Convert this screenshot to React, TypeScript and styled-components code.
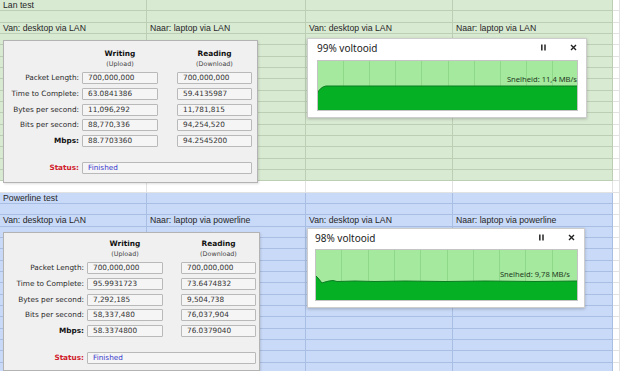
import React from "react";
import styled, { createGlobalStyle } from "styled-components";

const Global = createGlobalStyle`
  html, body { margin: 0; padding: 0; background: #ffffff; }
  body { width: 620px; height: 371px; overflow: hidden; }
`;

type Tone = "green" | "blue" | "white";

const tones: Record<Tone, { bg: string; line: string }> = {
  green: { bg: "#d9ead3", line: "#bccfb5" },
  blue: { bg: "#c9daf8", line: "#a9bee3" },
  white: { bg: "#ffffff", line: "#e2e2e2" },
};

const Page = styled.div`
  position: relative;
  width: 620px;
  height: 371px;
  overflow: hidden;
  font-family: "Liberation Sans", Arial, sans-serif;
`;

const Sheet = styled.div`
  display: flex;
  flex-direction: column;
`;

const Row = styled.div`
  display: grid;
  grid-template-columns: 147px 159px 147px 160px 1fr;
  height: 11.33px;
  flex: none;
`;

const Cell = styled.div<{ $tone: Tone }>`
  box-sizing: border-box;
  background: ${(p) => tones[p.$tone].bg};
  border-right: 1px solid ${(p) => tones[p.$tone].line};
  border-bottom: 1px solid ${(p) => tones[p.$tone].line};
  padding-left: 3px;
  font-size: 8.7px;
  line-height: 10.33px;
  color: #262626;
  white-space: nowrap;
  overflow: hidden;
`;

/* ---------- stats dialog ---------- */

const StatsPanel = styled.div<{ $top: number; $w: number; $h: number; $label: number; $padTop: number; $spacer: number }>`
  position: absolute;
  left: 3px;
  top: ${(p) => p.$top}px;
  width: ${(p) => p.$w}px;
  height: ${(p) => p.$h}px;
  box-sizing: border-box;
  padding-top: ${(p) => p.$padTop}px;
  background: #f0f0f0;
  border: 1px solid #b3b3b3;
  box-shadow: 1px 1px 2px rgba(0, 0, 0, 0.12);
  font-family: "DejaVu Sans", Verdana, sans-serif;
  font-size: 7.3px;
  color: #2a2a2a;
  display: grid;
  grid-template-columns: ${(p) => p.$label}px 76px ${(p) => p.$spacer}px 75px;
  grid-template-rows: 19.25px repeat(5, 12px) auto;
  row-gap: 3.75px;
  align-content: start;
`;

const Head = styled.div<{ $col: number }>`
  grid-column: ${(p) => p.$col};
  grid-row: 1;
  display: flex;
  flex-direction: column;
  align-items: center;
  line-height: 10px;
`;

const HeadTitle = styled.span`
  font-weight: bold;
  font-size: 7.4px;
  color: #111;
`;

const HeadSub = styled.span`
  font-size: 6.4px;
  color: #444;
`;

const Label = styled.div<{ $row: number; $strong?: boolean; $alert?: boolean; $gapTop?: number }>`
  grid-column: 1;
  grid-row: ${(p) => p.$row};
  text-align: right;
  padding-right: 3px;
  line-height: 12px;
  white-space: nowrap;
  font-weight: ${(p) => (p.$strong || p.$alert ? "bold" : "normal")};
  color: ${(p) => (p.$alert ? "#d0202c" : p.$strong ? "#111" : "#2a2a2a")};
  margin-top: ${(p) => p.$gapTop ?? 0}px;
`;

const ValueBox = styled.div<{ $row: number; $col: string; $accent?: boolean; $gapTop?: number }>`
  grid-column: ${(p) => p.$col};
  grid-row: ${(p) => p.$row};
  box-sizing: border-box;
  height: 12px;
  border: 1px solid #b9b9b9;
  border-radius: 1px;
  background: #f5f5f5;
  padding-left: 5px;
  line-height: 10px;
  color: ${(p) => (p.$accent ? "#3b3bcc" : "#333")};
  white-space: nowrap;
  margin-top: ${(p) => p.$gapTop ?? 0}px;
`;

type Stat = { label: string; w: string; r: string; strong?: boolean };

const lanStats: Stat[] = [
  { label: "Packet Length:", w: "700,000,000", r: "700,000,000" },
  { label: "Time to Complete:", w: "63.0841386", r: "59.4135987" },
  { label: "Bytes per second:", w: "11,096,292", r: "11,781,815" },
  { label: "Bits per second:", w: "88,770,336", r: "94,254,520" },
  { label: "Mbps:", w: "88.7703360", r: "94.2545200", strong: true },
];

const plcStats: Stat[] = [
  { label: "Packet Length:", w: "700,000,000", r: "700,000,000" },
  { label: "Time to Complete:", w: "95.9931723", r: "73.6474832" },
  { label: "Bytes per second:", w: "7,292,185", r: "9,504,738" },
  { label: "Bits per second:", w: "58,337,480", r: "76,037,904" },
  { label: "Mbps:", w: "58.3374800", r: "76.0379040", strong: true },
];

function Stats(props: { top: number; w: number; h: number; label: number; padTop: number; spacer: number; stats: Stat[] }) {
  return (
    <StatsPanel $top={props.top} $w={props.w} $h={props.h} $label={props.label} $padTop={props.padTop} $spacer={props.spacer}>
      <Head $col={2}>
        <HeadTitle>Writing</HeadTitle>
        <HeadSub>(Upload)</HeadSub>
      </Head>
      <Head $col={4}>
        <HeadTitle>Reading</HeadTitle>
        <HeadSub>(Download)</HeadSub>
      </Head>
      {props.stats.map((s, i) => (
        <React.Fragment key={s.label}>
          <Label $row={i + 2} $strong={s.strong}>{s.label}</Label>
          <ValueBox $row={i + 2} $col="2">{s.w}</ValueBox>
          <ValueBox $row={i + 2} $col="4">{s.r}</ValueBox>
        </React.Fragment>
      ))}
      <Label $row={7} $alert $gapTop={11.25}>Status:</Label>
      <ValueBox $row={7} $col="2 / 5" $accent $gapTop={11.25}>Finished</ValueBox>
    </StatsPanel>
  );
}

/* ---------- copy progress window ---------- */

const CopyWindow = styled.div<{ $top: number; $w: number; $padL: number }>`
  position: absolute;
  left: 307px;
  top: ${(p) => p.$top}px;
  width: ${(p) => p.$w}px;
  height: 80px;
  box-sizing: border-box;
  padding: 0 7px 0 ${(p) => p.$padL}px;
  background: #ffffff;
  border: 1px solid #cdcdcd;
  box-shadow: 0 1px 3px rgba(0, 0, 0, 0.22);
  font-family: "Noto Sans", "Open Sans", sans-serif;
  display: flex;
  flex-direction: column;
`;

const TitleBar = styled.div`
  display: flex;
  align-items: center;
  height: 17px;
  flex: none;
`;

const Title = styled.div`
  flex: 1;
  font-size: 10px;
  color: #1c1c1c;
  white-space: nowrap;
`;

const IconButton = styled.div<{ $gapRight?: number }>`
  width: 12px;
  height: 12px;
  display: flex;
  align-items: center;
  justify-content: center;
  margin-right: ${(p) => p.$gapRight ?? 0}px;
`;

const GraphBox = styled.div<{ $w: number; $h: number; $gap: number }>`
  position: relative;
  width: ${(p) => p.$w}px;
  height: ${(p) => p.$h}px;
  margin-top: ${(p) => p.$gap}px;
  flex: none;
`;

const Speed = styled.div<{ $y: number; $right: number }>`
  position: absolute;
  right: ${(p) => p.$right}px;
  top: ${(p) => p.$y}px;
  font-size: 7.6px;
  line-height: 9px;
  color: #1f3b1f;
  white-space: nowrap;
`;

function PauseIcon() {
  return (
    <svg width="7" height="7" viewBox="0 0 7 7">
      <rect x="1" y="0.5" width="1.6" height="6" fill="#333" />
      <rect x="4.2" y="0.5" width="1.6" height="6" fill="#333" />
    </svg>
  );
}

function CloseIcon() {
  return (
    <svg width="7" height="7" viewBox="0 0 7 7">
      <path d="M1 1 L6 6 M6 1 L1 6" stroke="#222" strokeWidth="1.4" />
    </svg>
  );
}

function Graph(props: { w: number; h: number; level: number; edge: string }) {
  const { w, h, level, edge } = props;
  const lines = [];
  for (let i = 1; i < 10; i++) {
    const x = Math.round((w / 10) * i) + 0.5;
    lines.push(<line key={i} x1={x} y1={0} x2={x} y2={h} stroke="#8fd88a" strokeWidth="1" />);
  }
  const fill = `${edge} L${w},${level} L${w},${h} L0,${h} Z`;
  return (
    <svg width={w} height={h} viewBox={`0 0 ${w} ${h}`} style={{ display: "block" }}>
      <rect x="0" y="0" width={w} height={h} fill="#a4e99d" />
      {lines}
      <path d={fill} fill="#06b025" />
      <path d={`${edge} L${w},${level}`} fill="none" stroke="#0b7d22" strokeWidth="1" />
      <rect x="0.5" y="0.5" width={w - 1} height={h - 1} fill="none" stroke="#c4c4c4" strokeWidth="1" />
    </svg>
  );
}

function Copy(props: {
  top: number; w: number; padL: number; title: string; gw: number; gh: number; gap: number;
  level: number; edge: string; speed: string; speedY: number; speedRight: number;
}) {
  return (
    <CopyWindow $top={props.top} $w={props.w} $padL={props.padL}>
      <TitleBar>
        <Title>{props.title}</Title>
        <IconButton $gapRight={18}><PauseIcon /></IconButton>
        <IconButton><CloseIcon /></IconButton>
      </TitleBar>
      <GraphBox $w={props.gw} $h={props.gh} $gap={props.gap}>
        <Graph w={props.gw} h={props.gh} level={props.level} edge={props.edge} />
        <Speed $y={props.speedY} $right={props.speedRight}>{props.speed}</Speed>
      </GraphBox>
    </CopyWindow>
  );
}

/* ---------- sheet data ---------- */

const lanRows: string[][] = [
  ["Lan test"],
  [],
  ["Van: desktop via LAN", "Naar: laptop via LAN", "Van: desktop via LAN", "Naar: laptop via LAN"],
];

const plcRows: string[][] = [
  ["Powerline test"],
  [],
  ["Van: desktop via LAN", "Naar: laptop via powerline", "Van: desktop via LAN", "Naar: laptop via powerline"],
];

function SheetRows(props: { tone: Tone; count: number; data: string[][]; prefix: string }) {
  const rows = [];
  for (let r = 0; r < props.count; r++) {
    const data = props.data[r] || [];
    rows.push(
      <Row key={props.prefix + r}>
        {[0, 1, 2, 3].map((c) => (
          <Cell key={c} $tone={props.tone}>{data[c] || ""}</Cell>
        ))}
        <Cell $tone="white" />
      </Row>
    );
  }
  return <>{rows}</>;
}

export default function App() {
  return (
    <Page>
      <Global />
      <Sheet>
        <SheetRows tone="green" count={16} data={lanRows} prefix="g" />
        <SheetRows tone="white" count={1} data={[]} prefix="w" />
        <SheetRows tone="blue" count={16} data={plcRows} prefix="b" />
      </Sheet>

      <Stats top={40} w={255} h={143} label={78} padTop={8} spacer={19} stats={lanStats} />
      <Stats top={232} w={257} h={139} label={83} padTop={6} spacer={18} stats={plcStats} />

      <Copy
        top={38} w={280} padL={9} title="99% voltooid" gw={261} gh={51} gap={4}
        level={26} edge="M0,34 Q3,27 9,26" speed="Snelheid: 11,4 MB/s" speedY={15} speedRight={1}
      />
      <Copy
        top={228} w={278} padL={7} title="98% voltooid" gw={263} gh={52} gap={3}
        level={32} edge="M0,26 L3,29 L7,34 L10,33 L14,32 L18,31.5 L22,32.5 L40,32 L60,32.5 L90,32 L130,32.5 L170,32 L220,32.5"
        speed="Snelheid: 9,78 MB/s" speedY={21} speedRight={8}
      />
    </Page>
  );
}
